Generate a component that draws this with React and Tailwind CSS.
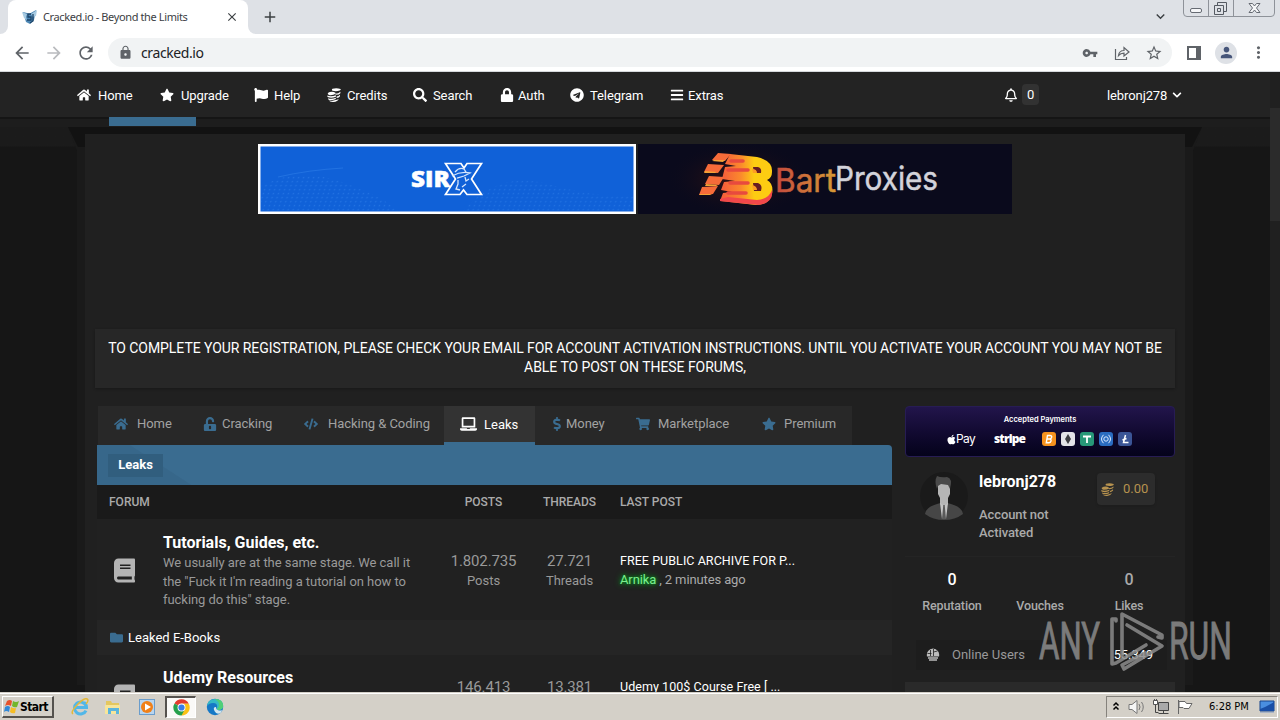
import clsx from "clsx";
import {
  FaBars,
  FaBook,
  FaChevronDown,
  FaCode,
  FaDollarSign,
  FaFlag,
  FaFolder,
  FaHome,
  FaLaptop,
  FaLock,
  FaRegBell,
  FaSearch,
  FaShoppingCart,
  FaStar,
  FaTelegram,
  FaUnlockAlt,
  FaApple,
} from "react-icons/fa";
import {
  MdArrowBack,
  MdArrowForward,
  MdClose,
  MdKeyboardArrowDown,
  MdLock,
  MdMoreVert,
  MdPerson,
  MdRefresh,
  MdStarBorder,
  MdVpnKey,
  MdAdd,
} from "react-icons/md";

function Coins({ className }) {
  return (
    <svg viewBox="0 0 14 14" className={className} fill="currentColor">
      <path d="M5.500.8q4-1.200 8 .2.800 1-.8 1.600-3.500 1.200-7.200.2-1.200-1 0-2z" />
      <path d="M13.400 3.800v1.400q-1 1.600-4.600 1.600L8 5.700q3.600 0 5.400-1.900zM13 6.800v1.400q-.8 1.400-3.400 1.800V8.500q2-.3 3.400-1.700z" />
      <path d="M.8 5q2.500-1.600 6-1 2.300.8 1.800 1.800Q6 7.600 2.500 7.200.2 6.500.8 5z" />
      <path d="M.3 7.500q3.500 1.700 8.600-.3v1.500Q4.500 10.800.5 9.100zM1 10.200q3.800 1.300 7.800-.5v1.400q-3.600 1.900-7.300.6z" />
      <path d="M1.800 12.500q3.500 1 6.700-.4 1.500-.2 3.200-1.200-1 2.600-5.200 3.100-3.700.1-4.700-1.500z" />
    </svg>
  );
}

const NAV = [
  { label: "Home", icon: FaHome, width: "w-[83px]", gap: "w-[21px]" },
  { label: "Upgrade", icon: FaStar, width: "w-[94px]", gap: "w-[21px]" },
  { label: "Help", icon: FaFlag, width: "w-[73px]", gap: "w-[20px]" },
  { label: "Credits", icon: Coins, width: "w-[86px]", gap: "w-[20px]" },
  { label: "Search", icon: FaSearch, width: "w-[87px]", gap: "w-[20px]" },
  { label: "Auth", icon: FaLock, width: "w-[70px]", gap: "w-[18px]" },
  { label: "Telegram", icon: FaTelegram, width: "w-[100px]", gap: "w-[20px]" },
  { label: "Extras", icon: FaBars, width: "w-[80px]", gap: "w-[18px]" },
];

const TABS = [
  { label: "Home", icon: FaHome, width: "w-[89px]", gap: "w-[23px]" },
  { label: "Cracking", icon: FaUnlockAlt, width: "w-[101px]", gap: "w-[19px]" },
  { label: "Hacking & Coding", icon: FaCode, width: "w-[156px]", gap: "w-[24px]" },
  { label: "Leaks", icon: FaLaptop, width: "w-[91px]", gap: "w-[24px]", active: true },
  { label: "Money", icon: FaDollarSign, width: "w-[86px]", gap: "w-[16px]" },
  { label: "Marketplace", icon: FaShoppingCart, width: "w-[126px]", gap: "w-[22px]" },
  { label: "Premium", icon: FaStar, width: "w-[105px]", gap: "w-[22px]" },
];

function BrowserTabs() {
  return (
    <div className="flex h-[34px] shrink-0 bg-[#dee1e6]">
      <div className="flex w-2 items-end bg-white">
        <div className="h-full w-full rounded-br-lg bg-[#dee1e6]" />
      </div>
      <div className="flex w-60 items-center rounded-t-lg bg-white pl-[14px] text-[#3c4043]">
        <svg viewBox="0 0 16 16" className="h-4 w-4">
          <path d="M1 3l4 1 2 1 7-4-1 5-1 5-4 4-4-2z" fill="#4d87b5" />
          <path d="M0 3l5 2-1 3 1 3-3-2zM9 5l6-4-1 6-3 1z" fill="#a8cbe2" />
          <path d="M9 5H6v3h3v3H5M11 5v7l-3 2" fill="none" stroke="#1d4468" strokeWidth="1.300" />
        </svg>
        <span className="ml-[5px] whitespace-nowrap font-['Noto_Sans',sans-serif] text-[11px] tracking-[-0.38px]">
          Cracked.io - Beyond the Limits
        </span>
        <MdClose className="ml-auto mr-[9px] h-[14px] w-[14px]" />
      </div>
      <div className="flex w-2 items-end bg-white">
        <div className="h-full w-full rounded-bl-lg bg-[#dee1e6]" />
      </div>
      <MdAdd className="ml-[5px] mt-2 h-[18px] w-[18px] text-[#3c4043]" />
      <MdKeyboardArrowDown className="ml-auto mr-[14px] mt-2 h-[17px] w-[17px] text-[#3c4043]" />
      <svg viewBox="0 0 92 17" className="mr-[5px] h-[17px] w-[92px]" fill="none" stroke="#8e9299">
        <path d="M.5 0V13q0 3.500 3.500 3.500H88q3.500 0 3.500-3.500V0M25.500 0V16M50.500 0V16" />
        <rect x="7.500" y="8.500" width="11" height="4" rx="1.500" stroke="#666b73" fill="#f5f6f8" />
        <path d="M34.500 5.500V2.500H43.500V11.500H40.500M31.500 5.500H40.500V14.500H31.500ZM34.500 8.500H37.500V11.500H34.500Z" stroke="#555a62" />
        <path
          d="M66 3.500h3.500l2 2.500 2-2.500H77L73.500 8l3.500 4.500h-3.500l-2-2.500-2 2.500H66L69.500 8z"
          stroke="#666b73"
          fill="#f5f6f8"
        />
      </svg>
    </div>
  );
}

function Toolbar() {
  return (
    <div className="flex h-[38px] shrink-0 items-center border-b border-[#d5d8dc] bg-white text-[#5f6368]">
      <MdArrowBack className="ml-3 h-5 w-5" />
      <MdArrowForward className="ml-3 h-5 w-5 text-[#b9bbbe]" />
      <MdRefresh className="ml-3 h-5 w-5" />
      <div className="ml-3 flex h-[29px] w-[1064px] items-center rounded-full bg-[#f1f3f4] pl-[10px]">
        <MdLock className="h-[15px] w-[15px]" />
        <span className="ml-2 font-['Noto_Sans',sans-serif] text-sm tracking-[-0.4px] text-[#202124]">
          cracked.io
        </span>
        <MdVpnKey className="ml-auto h-4 w-4" />
        <svg viewBox="0 0 16 16" className="ml-4 h-4 w-4" fill="none" stroke="currentColor" strokeWidth="1.2">
          <path d="M1.500 4v10.500h11V12M4.500 10.500c.5-3.500 2.500-5 5.500-5V2.500l5 4.500-5 4V8.200c-2.500 0-4 .6-5.500 2.300z" />
        </svg>
        <MdStarBorder className="ml-[15px] mr-[9px] h-[18px] w-[18px]" />
      </div>
      <svg viewBox="0 0 14 14" className="ml-[15px] h-[14px] w-[14px]">
        <path d="M1 1h12v12H1z" fill="none" stroke="currentColor" strokeWidth="2" />
        <path d="M9 1h4v12H9z" fill="currentColor" />
      </svg>
      <div className="ml-[14px] flex h-[22px] w-[22px] items-center justify-center rounded-full bg-[#dee1e6]">
        <MdPerson className="h-[17px] w-[17px] text-[#47567a]" />
      </div>
      <MdMoreVert className="ml-3 h-[19px] w-[19px]" />
    </div>
  );
}

function SiteHeader() {
  return (
    <div className="flex h-[45px] shrink-0 items-center bg-[#232323] pl-[77px] text-[13px] tracking-[-0.1px] text-white">
      {NAV.map(({ label, icon: Icon, width, gap }) => (
        <div key={label} className={clsx("flex items-center", width)}>
          <span className={clsx("shrink-0", gap)}>
            <Icon className="h-[14px] w-auto max-w-[15px]" />
          </span>
          <span className="pt-[2px]">{label}</span>
        </div>
      ))}
      <FaRegBell className="ml-[255px] h-[14px] w-[12px]" />
      <span className="ml-[5px] flex h-[21px] w-[17px] items-center justify-center rounded-sm bg-[#323232]">0</span>
      <span className="ml-[68px] pt-[2px]">lebronj278</span>
      <FaChevronDown className="ml-[5px] h-[10px] w-[10px]" />
    </div>
  );
}

function SirxBanner() {
  return (
    <svg viewBox="0 0 378 70" className="h-[70px] w-[378px]">
      <defs>
        <pattern id="dots" width="5" height="4" patternUnits="userSpaceOnUse" patternTransform="skewX(-18)">
          <circle cx="1.500" cy="1.500" r=".8" fill="#3d8bf0" />
        </pattern>
      </defs>
      <rect width="378" height="70" fill="#fff" />
      <rect x="2.500" y="2.500" width="373" height="65" fill="#1061d8" />
      <path d="M3 42Q40 22 84 38T140 67H3z" fill="url(#dots)" opacity=".45" />
      <path d="M205 67Q240 26 290 40T375 52V67z" fill="url(#dots)" opacity=".4" />
      <path d="M20 33Q50 26 85 24" stroke="#3d8bf0" opacity=".4" fill="none" />
      <text
        x="153"
        y="43"
        fill="#fff"
        stroke="#fff"
        strokeWidth=".5"
        fontFamily="Open Sans, sans-serif"
        fontWeight="800"
        fontSize="23"
        textLength="39"
        lengthAdjust="spacingAndGlyphs"
      >
        SIR
      </text>
      <path
        d="M187.500 19.500H203L206 24L209 19.500H223.500L213.500 35L223.500 50.500H209L205.500 46L202 50.500H187.500L197.500 35z"
        fill="#1061d8"
        stroke="#fff"
        strokeWidth="1.700"
      />
      <path
        d="M197 28q4-5 9-3l2 3M194 32q9-5 18-3l-6 3-7 2M200 36v4l-2 5 4 1M207 33l1 4 3-2M204 43l4-3"
        fill="none"
        stroke="#d6e6fc"
        strokeWidth="1.300"
      />
    </svg>
  );
}

function BartBanner() {
  return (
    <svg viewBox="0 0 374 70" className="ml-[2px] h-[70px] w-[374px]">
      <defs>
        <linearGradient id="bart" x1="0" x2="1">
          <stop offset="0" stopColor="#c5493e" />
          <stop offset="1" stopColor="#d69a35" />
        </linearGradient>
        <linearGradient id="bee" x1="0" x2="1">
          <stop offset="0" stopColor="#f4583c" />
          <stop offset=".4" stopColor="#fb8a2c" />
          <stop offset=".65" stopColor="#fdcc12" />
        </linearGradient>
        <radialGradient id="glow">
          <stop offset="0" stopColor="#3a1512" />
          <stop offset="1" stopColor="#0a0a1c" stopOpacity="0" />
        </radialGradient>
      </defs>
      <rect width="374" height="70" fill="#0a0a1c" />
      <ellipse cx="100" cy="35" rx="72" ry="38" fill="url(#glow)" />
      <path
        d="M92 10L119 13Q135 17 134 28Q134 34 129 36Q136 40 134 50Q131 61 118 61L82 57L85 49L94 48L83 46L86 38L97 37L84 35L87 23L98 22L87 20z"
        fill="url(#bee)"
      />
      <path d="M82 55L90 53L119 56Q131 55 134 46Q136 59 120 61L82 57z" fill="#f1474b" />
      <path
        d="M80 9l13 1-6 7-13-1zM70 20l16 1-6 8-14-1zM71 32l15 1-5 8-14-1zM64 43l16-1-5 8-14 1z"
        fill="#f66b39"
      />
      <path d="M76 16l11 0-2 2-11-1zM67 27l12 1-2 1-11 0zM68 40l12 1-2 1-11 0zM62 50l12 0-2 1-11 0z" fill="#f4a236" />
      <path d="M93 17h12M90 26h20M92 39h18M90 49h18" stroke="#e84a3e" strokeWidth="3.500" strokeLinecap="round" />
      <path d="M115 23h5q4 1 3 6h-7zM115 39h5q5 2 3 8h-7z" fill="#681d22" />
      <path d="M114 25q5 0 5 4h-4zM114 41q5 1 5 5h-4z" fill="#ff9d24" />
      <text
        x="137"
        y="48"
        fontFamily="Inter, sans-serif"
        fontSize="32"
        textLength="61"
        lengthAdjust="spacingAndGlyphs"
        fill="url(#bart)"
        stroke="url(#bart)"
        strokeWidth=".5"
      >
        Bart
      </text>
      <text
        x="197"
        y="46"
        fontFamily="Inter, sans-serif"
        fontSize="32"
        textLength="103"
        lengthAdjust="spacingAndGlyphs"
        fill="#d3d3da"
        stroke="#d3d3da"
        strokeWidth=".5"
      >
        Proxies
      </text>
    </svg>
  );
}

function ForumRow({ title, text, posts, threads, last, compact, children }) {
  const top = compact ? "pt-[22px]" : "pt-8";
  return (
    <div className={clsx("flex shrink-0 overflow-hidden bg-[#212121]", compact ? "h-[37px]" : "h-[101px]")}>
      <div className={clsx("w-[66px] shrink-0 pl-[17px]", compact ? "pt-[29px]" : "pt-[39px]")}>
        <FaBook className="h-[25px] w-[21px] text-[#b4b4b4]" />
      </div>
      <div className={clsx("w-[273px] shrink-0", compact ? "pt-[13px]" : "pt-[14px]")}>
        <div className="text-base font-bold leading-[19px] text-white">{title}</div>
        {text && (
          <p className="w-[262px] pt-[2px] text-[13px] leading-[18.500px] tracking-[-0.05px] text-[#999]">{text}</p>
        )}
      </div>
      <div className={clsx("w-[95px] shrink-0 text-center text-[#999]", top)}>
        <div className="text-[15px] leading-5 tracking-[-0.15px]">{posts}</div>
        {!compact && <div className="text-[13px] leading-[19px]">Posts</div>}
      </div>
      <div className={clsx("w-[77px] shrink-0 text-center text-[#999]", top)}>
        <div className="text-[15px] leading-5 tracking-[-0.15px]">{threads}</div>
        {!compact && <div className="text-[13px] leading-[19px]">Threads</div>}
      </div>
      <div className={clsx("pl-3 text-[13px] text-[#aaa]", top)}>
        <div className="text-[12.500px] leading-5 tracking-[0.050px] text-white">{last}</div>
        <div className="leading-[18px] tracking-[-0.12px]">{children}</div>
      </div>
    </div>
  );
}

function ForumList() {
  return (
    <div className="w-[795px]">
      <div className="ml-px flex h-[39px] w-[754px] bg-[#282828] text-[13px] text-[#a2a2a2]">
        {TABS.map(({ label, icon: Icon, width, gap, active }) => (
          <div
            key={label}
            className={clsx(
              "flex items-center pl-4",
              width,
              active ? "-mr-px border-b-[3px] border-[#3a6c90] bg-[#333] text-white" : "pb-[3px]",
            )}
          >
            <span className={clsx("shrink-0", gap)}>
              <Icon
                className={clsx(
                  "h-[14px]",
                  active ? "w-[17px] text-white" : "w-auto max-w-[17px] text-[#3a6c90]",
                )}
              />
            </span>
            <span className={clsx("whitespace-nowrap", active ? "pt-px" : "tracking-[-0.05px]")}>{label}</span>
          </div>
        ))}
      </div>
      <div className="flex h-10 items-center rounded-tr-sm bg-[#3a6c90] bg-[linear-gradient(33deg,#37678a_0_51px,transparent_52px)] pl-[11px]">
        <span className="flex h-[23px] w-[55px] items-center justify-center bg-[#315e7e] text-[13px] font-bold text-white">
          Leaks
        </span>
      </div>
      <div className="flex h-[34px] items-center bg-[#1a1a1a] pl-3 text-xs font-medium text-[#aaa]">
        <span className="w-[327px]">FORUM</span>
        <span className="w-[95px] text-center">POSTS</span>
        <span className="w-[77px] text-center">THREADS</span>
        <span className="pl-3">LAST POST</span>
      </div>
      <ForumRow
        title="Tutorials, Guides, etc."
        text={`We usually are at the same stage. We call it the "Fuck it I'm reading a tutorial on how to fucking do this" stage.`}
        posts="1.802.735"
        threads="27.721"
        last="FREE PUBLIC ARCHIVE FOR P..."
      >
        <span className="text-[#7dec8f] [text-shadow:0_0_6px_#00c82a,0_0_3px_#008a18]">Arnika</span> , 2 minutes ago
      </ForumRow>
      <div className="flex h-[35px] items-center bg-[#252525] pl-[13px] text-[13px] text-white">
        <FaFolder className="mr-[5px] h-[13px] w-[13px] text-[#3a6c90]" />
        Leaked E-Books
      </div>
      <ForumRow
        compact
        title="Udemy Resources"
        posts="146.413"
        threads="13.381"
        last="Udemy 100$ Course Free [ ..."
      />
    </div>
  );
}

function Payments() {
  return (
    <div className="flex h-[51px] flex-col items-center rounded-sm border border-[#271c54] bg-linear-to-b from-[#22154b] to-[#05031b] pt-[7px] font-['Inter',sans-serif] text-white">
      <div className="text-[7.500px] font-semibold leading-3">Accepted Payments</div>
      <div className="flex w-[186px] items-center pt-[5px]">
        <FaApple className="h-[11px] w-[9px]" />
        <span className="w-[38px] text-xs leading-4 tracking-[-0.6px]">Pay</span>
        <span className="w-12 font-['Open_Sans',sans-serif] text-[12px] font-extrabold leading-4 tracking-[-0.9px]">
          stripe
        </span>
        <svg viewBox="0 0 90 14" className="h-[14px] w-[90px]">
          <rect x="0" width="14" height="14" rx="3" fill="#f6921e" />
          <path
            d="M5.500 3.500h2.500q2 0 1.700 1.700T7.500 7q2 0 1.500 2t-2.500 1.800H4.300zM5 7h2.500"
            fill="none"
            stroke="#fff"
            strokeWidth="1.400"
          />
          <rect x="19" width="14" height="14" rx="3" fill="#e4e4e8" />
          <path d="M26 2l3 5-3 5-3-5z" fill="#3d3d42" />
          <rect x="38" width="14" height="14" rx="3" fill="#279778" />
          <path d="M41 4.500h8M45 4.500V11" stroke="#fff" strokeWidth="1.800" />
          <rect x="57" width="14" height="14" rx="3" fill="#2a6cc0" />
          <circle cx="64" cy="7" r="2.200" fill="none" stroke="#dceaff" />
          <path d="M61.500 2.800q-4 4.200 0 8.400M66.500 2.800q4 4.200 0 8.400" fill="none" stroke="#dceaff" />
          <rect x="76" width="14" height="14" rx="3" fill="#3b5596" />
          <path d="M83.500 3L81.500 10.500H86.500M80.500 8l4-1.500" fill="none" stroke="#fff" strokeWidth="1.500" />
        </svg>
      </div>
    </div>
  );
}

function Avatar() {
  return (
    <svg viewBox="0 0 48 48" className="h-12 w-12 shrink-0">
      <circle cx="24" cy="24" r="24" fill="#1a1a1a" />
      <path d="M5 42q1-7 12-10l7-2 7 2q11 3 12 10-8 6-19 6T5 42z" fill="#464646" />
      <path d="M18 12h12v10l-2 4v6l-4 3-4-3v-6l-2-4z" fill="#b5b5b5" />
      <path d="M20 31l4 3 4-3-2 16h-4z" fill="#c4c4c4" />
      <path d="M23.300 33h1.400l1.300 14h-4z" fill="#5a5a5a" />
      <path d="M17 17q-3-8 0-13 4 2 10 1 6 1 3 12l-2-4-7-1-3 2z" fill="#4a4a4a" />
    </svg>
  );
}

function OnlineIcon() {
  return (
    <svg viewBox="0 0 14 14" className="mr-3 h-[14px] w-[14px] text-[#bbb]">
      <path d="M7 .5a6.500 6.500 0 0 1 6 8H1a6.500 6.500 0 0 1 6-8z" fill="currentColor" />
      <path d="M2 10h10M3 12h8" stroke="currentColor" strokeWidth="1.300" />
      <path d="M4.500 2v6M7.500 4l4-1M7.500 1v7M1.500 5.500h4" stroke="#1d1d1d" strokeWidth=".8" />
    </svg>
  );
}

function Stat({ value, label, className }) {
  return (
    <div className={clsx("flex w-[88px] flex-col items-center text-[#aaa]", className)}>
      <div className={clsx("h-7 text-base font-medium leading-5", label === "Reputation" && "text-white")}>
        {value}
      </div>
      <div className="text-[12.500px] font-medium leading-4 tracking-[-0.15px]">{label}</div>
    </div>
  );
}

function Sidebar() {
  return (
    <div className="ml-[13px] w-[270px]">
      <Payments />
      <div className="flex h-[99px] pl-[15px] pt-[15px]">
        <Avatar />
        <div className="ml-[11px] w-[118px]">
          <div className="text-base font-bold leading-[19px] text-white">lebronj278</div>
          <div className="mt-[15px] w-20 text-[13px] font-medium leading-[18px] tracking-[-0.1px] text-[#aaa]">
            Account not Activated
          </div>
        </div>
        <div className="mt-px flex h-8 w-[58px] items-center rounded-sm bg-[#2c2c2c] pl-1 text-[13px] text-[#b6924f] shadow">
          <Coins className="mr-[9px] h-[13px] w-[13px]" />
          0.00
        </div>
      </div>
      <div className="flex h-[77px] border-t border-[#242424] bg-[#202020] pl-[3px] pt-[13px]">
        <Stat value="0" label="Reputation" />
        <Stat value="" label="Vouches" />
        <Stat value="0" label="Likes" className="ml-px" />
      </div>
      <div className="ml-[11px] mr-2 mt-[7px] flex h-[30px] items-center bg-[#1d1d1d] pl-[10px] text-[13px] text-[#999]">
        <OnlineIcon />
        Online Users
        <span className="ml-auto mr-[14px] tracking-[-0.1px] text-white">55.349</span>
      </div>
      <div className="mt-[12px] h-4 bg-[#2a2a2a]" />
    </div>
  );
}

function Flap({ className }) {
  return (
    <svg viewBox="0 0 17 558" className={clsx("h-[558px] w-[17px] shrink-0", className)}>
      <path d="M0 0H17V558H9V24z" fill="#1a1a1a" />
      <path d="M0 0H17V20H10z" fill="#121212" />
    </svg>
  );
}

function Watermark() {
  return (
    <svg viewBox="0 0 200 66" className="absolute left-[1036px] top-[608px] h-[66px] w-[200px] opacity-85">
      <g fill="#8c8c8c" stroke="#8c8c8c" strokeWidth=".9" fontFamily="Roboto, sans-serif" fontSize="51">
        <text x="3" y="51" textLength="61" lengthAdjust="spacingAndGlyphs">
          ANY
        </text>
        <text x="133" y="51" textLength="63" lengthAdjust="spacingAndGlyphs">
          RUN
        </text>
      </g>
      <g fill="none" stroke="#8c8c8c" strokeWidth="3.600" strokeLinejoin="round" strokeLinecap="round">
        <path d="M80 13V11L76 11V56L80 55L110 37" />
        <path d="M86 48V6L126 27V30L122 29" />
        <path d="M91 17L126 38L88 61L86 57L109 45" />
      </g>
    </svg>
  );
}

function Taskbar() {
  return (
    <div className="flex h-7 shrink-0 border-t border-[#d4d0c8] bg-[#d4d0c8] font-['DejaVu_Sans_Condensed','DejaVu_Sans',sans-serif] text-[11px] text-black shadow-[inset_0_1px_#fff]">
      <div className="ml-[2px] mt-[3px] flex h-[22px] w-[52px] items-center border border-b-2 border-r-2 border-b-[#55524e] border-r-[#55524e] border-l-white border-t-white pl-px">
        <svg viewBox="0 0 16 16" className="h-4 w-4 shrink-0">
          <path d="M3 2q3-2 5 0L7 7Q4 5 1 7z" fill="#e6522c" />
          <path d="M9 2q3 2 6 0l-2 6q-3 1-5-1z" fill="#72b62c" />
          <path d="M1 8q3-2 5 0l-1 5q-3-2-5 0z" fill="#3188d8" />
          <path d="M7 8q3 2 5 1l-1 5q-3 1-5-1z" fill="#f6bd25" />
        </svg>
        <span className="text-xs font-bold tracking-[-0.55px]">Start</span>
      </div>
      <svg viewBox="0 0 18 18" className="ml-[17px] mt-[5px] h-[18px] w-[18px]">
        <path d="M15 12.500A6 6 0 1 1 15 7.500M4 9.500H15.500Q15.500 6 13 4.500" fill="none" stroke="#52b7e8" strokeWidth="3" />
        <path d="M2 16Q-1 14 7 6T17 2q0 2-2 4" fill="none" stroke="#e3b93b" strokeWidth="1.500" />
      </svg>
      <svg viewBox="0 0 18 18" className="ml-[15px] mt-[5px] h-[18px] w-[18px]">
        <path d="M2 3h5l1 2h7v11H2z" fill="#e4c75f" />
        <path d="M1 7h15v9H1z" fill="#f7e59a" />
        <path d="M4 10h11v6h-3v-3H7v3H4z" fill="#5cb5dd" />
      </svg>
      <svg viewBox="0 0 18 18" className="ml-4 mt-[5px] h-[18px] w-[18px]">
        <rect x="1.500" y="1.500" width="15" height="15" fill="#b8d5ef" stroke="#6a9dcc" />
        <circle cx="9" cy="9" r="6" fill="#f08018" />
        <path d="M7 5.500v7l6-3.500z" fill="#fff" />
      </svg>
      <div className="ml-[9px] mt-[3px] flex h-[22px] w-[31px] items-center justify-center border border-l-2 border-t-2 border-b-white border-l-[#55524e] border-r-white border-t-[#55524e] bg-[#faf9f7]">
        <svg viewBox="0 0 18 18" className="h-[17px] w-[17px]">
          <path d="M9 9L1.600 4.700A8.500 8.500 0 0 1 16.700 5H9z" fill="#e33b2e" />
          <path d="M9 9V5h7.700A8.500 8.500 0 0 1 9 17.500z" fill="#fbc116" />
          <path d="M9 9l3.500 2L9 17.500A8.500 8.500 0 0 1 1.600 4.700z" fill="#26a04c" />
          <circle cx="9" cy="9" r="4.200" fill="#fff" />
          <circle cx="9" cy="9" r="3.300" fill="#3a7de8" />
        </svg>
      </div>
      <svg viewBox="0 0 18 18" className="ml-[10px] mt-[5px] h-[18px] w-[18px]">
        <circle cx="9" cy="9" r="8.200" fill="#1678c6" />
        <path d="M1 8Q2 1 9 1q8 0 8.200 7Q17 12 12 12q-2 0-1-2 1-5-4-5-4 0-6 3z" fill="#35b9c5" />
        <path d="M9 1q8 0 8.200 7Q17 12 12 12l-1-1q5-5-2-10z" fill="#50cf77" />
        <path d="M10 9q0 3 3 3.500 2 .3 3.500-.5l-2 3q-4 2-6-2t1.500-4z" fill="#d4e7ee" />
      </svg>
      <div className="ml-auto mr-[2px] mt-[3px] flex h-[22px] w-[172px] items-center border border-b-white border-l-[#85827c] border-r-white border-t-[#85827c] pl-[5px]">
        <svg viewBox="0 0 88 18" className="h-[18px] w-[88px]">
          <path d="M1.500 7.500L4 5l2.500 2.500M1.500 11.500L4 9l2.500 2.500" fill="none" stroke="#000" strokeWidth="1.500" />
          <path d="M17 6.500h3l5-4v13l-5-4h-3z" fill="#f5f5f5" stroke="#777" />
          <path d="M27 6q2 3 0 6M29.500 4q3.500 5 0 10" fill="none" stroke="#777" />
          <path d="M46.500 4.500h10v8h-10z" fill="#a9a9a9" stroke="#444" />
          <path d="M46.500 15.500h10M51.500 13v2M43.500 7v7.500h3" fill="none" stroke="#444" />
          <path d="M41.500 2.500h4v4h-4zM42.500 1v2M44.500 1v2" fill="#fff" stroke="#555" />
          <path d="M66.500 2v14M67 3.500h6l1.500 2H80l-3 5h-5l-1-1h-4z" fill="#fff" stroke="#666" />
        </svg>
        <span className="ml-[9px] w-[50px] whitespace-nowrap text-[11px]">6:28 PM</span>
        <svg viewBox="0 0 16 14" className="h-[14px] w-4">
          <path d="M1 1h14v10H1z" fill="#4a8ee0" stroke="#17448c" />
          <path d="M1 9Q7 7 15 2v9H1z" fill="#1a4fa6" />
          <path d="M1 12.500h14" stroke="#a9b4c6" />
        </svg>
      </div>
    </div>
  );
}

export default function App() {
  return (
    <div className="relative flex h-[720px] w-[1280px] flex-col overflow-hidden bg-[#161616] font-['Roboto',sans-serif]">
      <BrowserTabs />
      <Toolbar />
      <div className="flex h-[620px] shrink-0 overflow-hidden">
        <div className="w-[1270px] bg-linear-to-b from-[#1b1b1b] from-[74px] to-[#161616] to-[75px]">
          <SiteHeader />
          <div className="h-[10px] border-t-2 border-[#151515] bg-[#1d1d1d] pl-[109px]">
            <div className="-mt-[2px] h-[9px] w-[87px] bg-[#3a6c90]" />
          </div>
          <div className="flex pl-[68px]">
            <Flap />
            <div className="h-[565px] w-[1100px] shrink-0 border-t-[7px] border-[#121212] bg-[#202020] px-[10px] pt-[10px]">
              <div className="flex h-[70px] pl-[163px]">
                <SirxBanner />
                <BartBanner />
              </div>
              <div className="mt-[115px] flex h-[59px] items-center bg-[#272727] px-2 pb-px text-center text-sm leading-[19px] tracking-[-0.055px] text-white shadow-[0_1px_2px_#181818]">
                <p className="w-full">
                  TO COMPLETE YOUR REGISTRATION, PLEASE CHECK YOUR EMAIL FOR ACCOUNT ACTIVATION INSTRUCTIONS. UNTIL YOU
                  ACTIVATE YOUR ACCOUNT YOU MAY NOT BE
                  <br />
                  ABLE TO POST ON THESE FORUMS,
                </p>
              </div>
              <div className="mt-[18px] flex pl-[2px]">
                <ForumList />
                <Sidebar />
              </div>
            </div>
            <Flap className="-scale-x-100" />
          </div>
        </div>
        <div className="w-[10px] bg-[#202020] pt-9">
          <div className="h-[113px] bg-[#2b2b2b]" />
        </div>
      </div>
      <Taskbar />
      <Watermark />
    </div>
  );
}
